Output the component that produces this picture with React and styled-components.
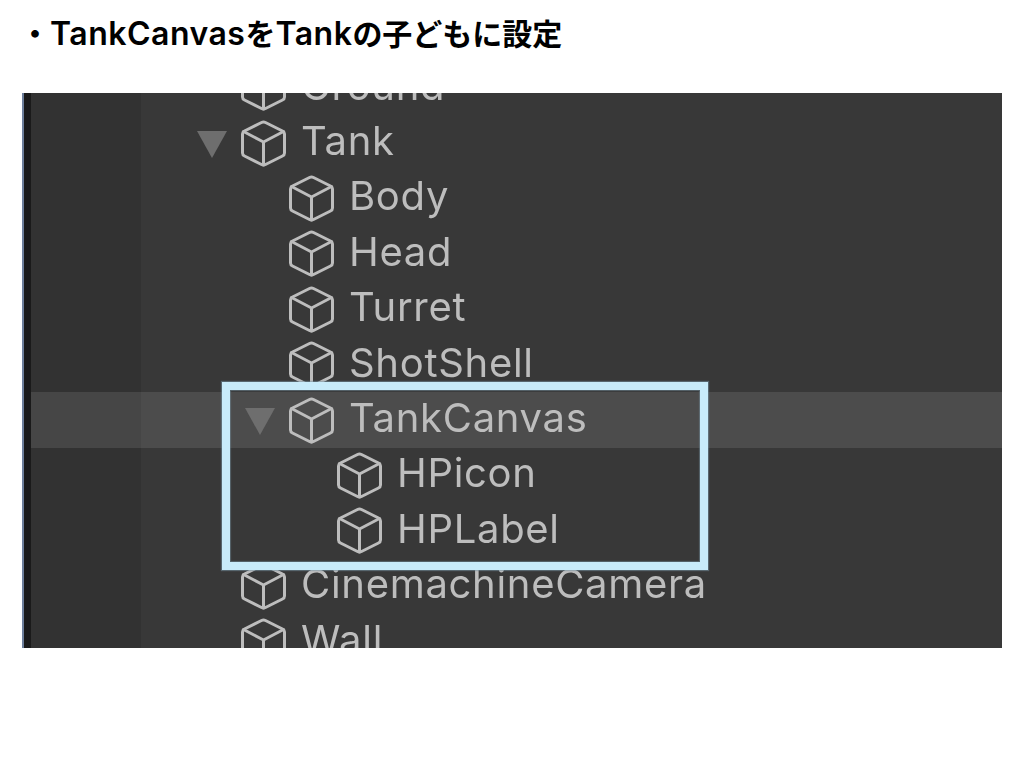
import React from "react";
import styled, { createGlobalStyle } from "styled-components";

const rows = [
    { name: "Ground", depth: 0 },
    { name: "Tank", depth: 0, open: true },
    { name: "Body", depth: 1 },
    { name: "Head", depth: 1 },
    { name: "Turret", depth: 1 },
    { name: "ShotShell", depth: 1 },
    { name: "TankCanvas", depth: 1, open: true, selected: true },
    { name: "HPicon", depth: 2 },
    { name: "HPLabel", depth: 2 },
    { name: "CinemachineCamera", depth: 0 },
    { name: "Wall", depth: 0 },
];

const CubeIcon = () => (
    <Cube viewBox="0 0 45 47" aria-hidden="true">
        <path d="M20.5 2.5 Q22.5 1.5 24.5 2.5 L41.5 11 Q43.5 12 43.5 14 V33 Q43.5 35 41.5 36 L24.5 44.5 Q22.5 45.5 20.5 44.5 L3.5 36 Q1.5 35 1.5 33 V14 Q1.5 12 3.5 11 Z" />
        <path d="M2.5 11.5 L22.5 22 L42.5 11.5 M22.5 22 V45" />
    </Cube>
);

const App = () => {
    return (
        <>
            <GlobalStyle />
            <Page>
                <Title>・<Latin>TankCanvas</Latin>を<Latin>Tank</Latin>の子どもに設定</Title>
                <Panel>
                    <Edge />
                    <Tree>
                        <List>
                            {rows.map((row) => (
                                <Row key={row.name} $depth={row.depth} $selected={row.selected}>
                                    <ArrowSlot>{row.open && <Arrow />}</ArrowSlot>
                                    <CubeIcon />
                                    <Label>{row.name}</Label>
                                </Row>
                            ))}
                        </List>
                    </Tree>
                    <Highlight />
                </Panel>
            </Page>
        </>
    );
};

const GlobalStyle = createGlobalStyle`
    html, body {
        margin: 0;
        background: #ffffff;
    }
`;

const Page = styled.div`
    width: 1024px;
    height: 768px;
    padding: 13px 22px 0;
    box-sizing: border-box;
    overflow: hidden;
`;

const Title = styled.h1`
    margin: 0 0 41px -2px;
    height: 39px;
    line-height: 39px;
    font-family: "Noto Sans CJK JP", sans-serif;
    font-size: 30px;
    font-weight: 700;
    color: #000000;
    white-space: nowrap;
`;

const Latin = styled.span`
    font-family: Inter, "Liberation Sans", sans-serif;
    font-size: 32px;
    font-weight: 600;
    letter-spacing: 0.5px;
`;

const Panel = styled.div`
    position: relative;
    display: flex;
    width: 980px;
    height: 555px;
    overflow: hidden;
`;

const Edge = styled.div`
    flex: 0 0 9px;
    background: linear-gradient(90deg, #6d7f9c 2px, #1a1a1a 2px);
`;

const Tree = styled.div`
    flex: 1;
    overflow: hidden;
    background: linear-gradient(90deg, #323232 110px, #383838 110px);
`;

const List = styled.div`
    display: flex;
    flex-direction: column;
    margin-top: -33px;
    filter: blur(0.6px);
`;

const Row = styled.div`
    display: flex;
    align-items: center;
    flex: 0 0 55.4px;
    height: 55.4px;
    box-sizing: border-box;
    padding-left: ${(props) => 166 + props.$depth * 48}px;
    background: ${(props) => (props.$selected ? "rgba(255, 255, 255, 0.1)" : "transparent")};
`;

const ArrowSlot = styled.div`
    display: flex;
    flex: 0 0 44px;
    height: 100%;
    align-items: center;
`;

const Arrow = styled.div`
    width: 0;
    height: 0;
    margin-top: 3px;
    border-left: 15.5px solid transparent;
    border-right: 15.5px solid transparent;
    border-top: 27px solid #6e6e6e;
`;

const Cube = styled.svg`
    flex: 0 0 45px;
    width: 45px;
    height: 47px;
    fill: none;
    stroke: #bdbdbd;
    stroke-width: 3;
    stroke-linejoin: round;
    stroke-linecap: round;
`;

const Label = styled.span`
    margin-left: 15px;
    margin-top: -4px;
    font-family: Inter, "Liberation Sans", sans-serif;
    font-size: 40px;
    font-weight: 400;
    letter-spacing: 0.7px;
    line-height: 46px;
    color: #bdbdbd;
    white-space: nowrap;
`;

const Highlight = styled.div`
    position: absolute;
    left: 200px;
    top: 289px;
    width: 486px;
    height: 188px;
    box-sizing: border-box;
    border: 8px solid #c8ebfa;
    box-shadow: 0 0 1px 1px rgba(120, 150, 165, 0.5), inset 0 0 1px 1px rgba(120, 150, 165, 0.5);
`;

export default App;
